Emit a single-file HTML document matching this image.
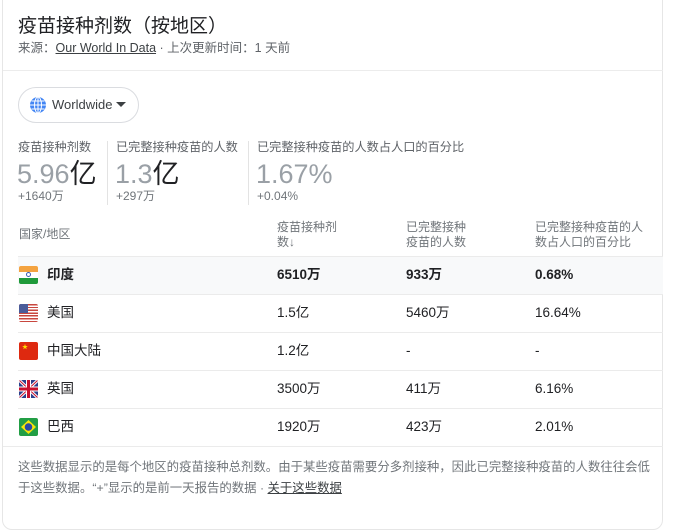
<!DOCTYPE html>
<html><head><meta charset="utf-8"><style>
*{margin:0;padding:0;box-sizing:border-box}
body{width:686px;height:502px;background:#fff;font-family:"Liberation Sans","Noto Sans CJK SC",sans-serif;color:#202124;position:relative;overflow:hidden}
.card{position:absolute;left:2px;top:-10px;width:661px;height:540px;border:1px solid #e6e6e6;border-radius:10px}
.a{position:absolute;white-space:nowrap;line-height:16px}
.hr{position:absolute;left:18px;width:645px;height:1px;background:#ebebeb}
.vr{position:absolute;width:1px;background:#e3e3e3;top:141px;height:64px}
.lbl{font-size:12.2px;color:#5f6368}
.big{font-size:27px;color:#9aa0a6;font-weight:300;line-height:30px}
.big b{color:#202124;font-weight:400}
.sub{font-size:12px;color:#70757a}
.th{font-size:12px;color:#70757a;line-height:15px}
.td{font-size:13.5px;color:#202124;line-height:18px}
.flag{position:absolute;left:19px;width:19px;height:18px;border-radius:2px;overflow:hidden}
</style></head><body>
<div class="card"></div>
<div class="a" style="left:18px;top:15px;font-size:19px;line-height:24px">疫苗接种剂数（按地区）</div>
<div class="a" style="left:18px;top:40px;font-size:12.5px;color:#5f6368">来源：<span style="text-decoration:underline;color:#3c4043">Our World In Data</span> · 上次更新时间：1 天前</div>
<div style="position:absolute;left:3px;top:70px;width:660px;height:1px;background:#ececec"></div>
<div style="position:absolute;left:18px;top:87px;width:121px;height:36px;border:1px solid #dadce0;border-radius:18px"></div>
<svg class="a" style="left:29px;top:96px" width="18" height="18" viewBox="0 0 18 18"><circle cx="9" cy="9" r="8" fill="#4285f4"/><g stroke="#fff" stroke-width="1" fill="none"><ellipse cx="9" cy="9" rx="3.5" ry="8"/><line x1="9" y1="1" x2="9" y2="17"/><line x1="1" y1="9" x2="17" y2="9"/><line x1="2.5" y1="5" x2="15.5" y2="5"/><line x1="2.5" y1="13" x2="15.5" y2="13"/></g></svg>
<div class="a" style="left:52px;top:97px;font-size:13px;color:#3c4043">Worldwide</div>
<div class="a" style="left:116px;top:102px;width:0;height:0;border-left:5px solid transparent;border-right:5px solid transparent;border-top:5px solid #3c4043"></div>

<div class="a lbl" style="left:18px;top:139px">疫苗接种剂数</div>
<div class="a big" style="left:17px;top:159px">5.96<b>亿</b></div>
<div class="a sub" style="left:18px;top:188px">+1640万</div>
<div class="vr" style="left:107px"></div>
<div class="a lbl" style="left:116px;top:139px">已完整接种疫苗的人数</div>
<div class="a big" style="left:115px;top:159px">1.3<b>亿</b></div>
<div class="a sub" style="left:116px;top:188px">+297万</div>
<div class="vr" style="left:248px"></div>
<div class="a lbl" style="left:257px;top:139px">已完整接种疫苗的人数占人口的百分比</div>
<div class="a big" style="left:256px;top:159px">1.67%</div>
<div class="a sub" style="left:257px;top:188px">+0.04%</div>

<div class="a th" style="left:19px;top:227px">国家/地区</div>
<div class="a th" style="left:277px;top:220px">疫苗接种剂<br>数↓</div>
<div class="a th" style="left:406px;top:220px">已完整接种<br>疫苗的人数</div>
<div class="a th" style="left:535px;top:220px">已完整接种疫苗的人<br>数占人口的百分比</div>

<div style="position:absolute;left:18px;top:257px;width:645px;height:37px;background:#f8f9fa"></div>
<div class="hr" style="top:256px"></div>
<div class="hr" style="top:294px"></div>
<div class="hr" style="top:332px"></div>
<div class="hr" style="top:370px"></div>
<div class="hr" style="top:408px"></div>
<div style="position:absolute;left:3px;top:446px;width:660px;height:1px;background:#ebebeb"></div>

<div class="flag" style="top:266px;background:linear-gradient(#f4a340 0 33%,#fff 33% 66%,#1f9a3a 66%)"><div style="position:absolute;left:7px;top:6px;width:5px;height:5px;border-radius:50%;border:1px solid #3a5bb0"></div></div>
<div class="flag" style="top:304px;background:repeating-linear-gradient(#c8463e 0 1.4px,#fff 1.4px 2.8px)"><div style="position:absolute;left:0;top:0;width:9px;height:9px;background:#4a5c9a"></div></div>
<div class="flag" style="top:342px;background:#de2910"><div style="position:absolute;left:3px;top:3px;color:#ffde00;font-size:6px;line-height:6px">★</div></div>
<div class="flag" style="top:380px;background:#2b3f8c"><svg width="19" height="18"><path d="M0 0L19 18M19 0L0 18" stroke="#fff" stroke-width="3"/><path d="M0 0L19 18M19 0L0 18" stroke="#c8102e" stroke-width="1"/><path d="M9.5 0V18M0 9H19" stroke="#fff" stroke-width="5"/><path d="M9.5 0V18M0 9H19" stroke="#c8102e" stroke-width="3"/></svg></div>
<div class="flag" style="top:418px;background:#229e45"><svg width="19" height="18"><path d="M9.5 2L17 9L9.5 16L2 9Z" fill="#f8e509"/><circle cx="9.5" cy="9" r="3.8" fill="#2b49a3"/></svg></div>

<div class="a td" style="left:47px;top:266px;font-weight:bold">印度</div>
<div class="a td" style="left:277px;top:266px;font-weight:bold">6510万</div>
<div class="a td" style="left:406px;top:266px;font-weight:bold">933万</div>
<div class="a td" style="left:535px;top:266px;font-weight:bold">0.68%</div>
<div class="a td" style="left:47px;top:304px">美国</div>
<div class="a td" style="left:277px;top:304px">1.5亿</div>
<div class="a td" style="left:406px;top:304px">5460万</div>
<div class="a td" style="left:535px;top:304px">16.64%</div>
<div class="a td" style="left:47px;top:342px">中国大陆</div>
<div class="a td" style="left:277px;top:342px">1.2亿</div>
<div class="a td" style="left:406px;top:342px">-</div>
<div class="a td" style="left:535px;top:342px">-</div>
<div class="a td" style="left:47px;top:380px">英国</div>
<div class="a td" style="left:277px;top:380px">3500万</div>
<div class="a td" style="left:406px;top:380px">411万</div>
<div class="a td" style="left:535px;top:380px">6.16%</div>
<div class="a td" style="left:47px;top:418px">巴西</div>
<div class="a td" style="left:277px;top:418px">1920万</div>
<div class="a td" style="left:406px;top:418px">423万</div>
<div class="a td" style="left:535px;top:418px">2.01%</div>

<div class="a" style="left:18px;top:457px;font-size:12.4px;color:#70757a;line-height:21px;white-space:normal;width:640px">这些数据显示的是每个地区的疫苗接种总剂数。由于某些疫苗需要分多剂接种，因此已完整接种疫苗的人数往往会低于这些数据。“+”显示的是前一天报告的数据 · <span style="text-decoration:underline;color:#3c4043">关于这些数据</span></div>
</body></html>
